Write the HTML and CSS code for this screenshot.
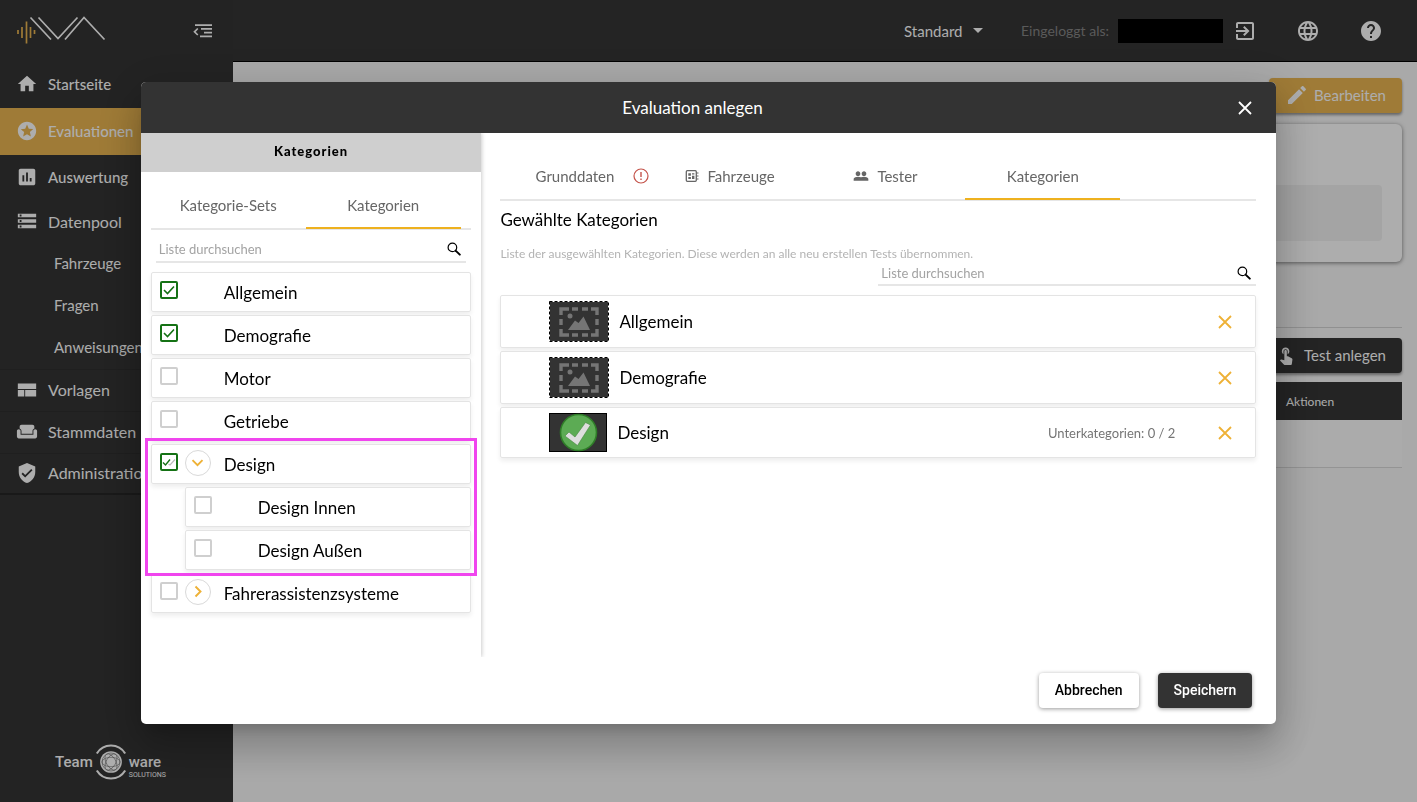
FILE: index.html
```html
<!DOCTYPE html>
<html lang="de">
<head>
<meta charset="utf-8">
<title>Evaluation anlegen</title>
<meta name="viewport" content="width=device-width, initial-scale=1">
<link rel="stylesheet" href="styles.css">
</head>
<body>
<svg class="sprite" aria-hidden="true">
  <symbol id="i-search" viewBox="0 0 14 14"><circle cx="5.4" cy="5.4" r="4.3" fill="none" stroke="#000" stroke-width="1.2"/><path d="M8.6 8.6l4.200 4" stroke="#000" stroke-width="2" stroke-linecap="round"/></symbol>
  <symbol id="i-x" viewBox="0 0 14 14"><path d="M1 1l12 12M13 1L1 13" fill="none" stroke="currentColor" stroke-width="1.8"/></symbol>
  <symbol id="i-image" viewBox="0 0 60 41">
    <rect width="60" height="41" fill="#333"/>
    <rect x=".5" y=".5" width="59" height="40" fill="none" stroke="#fff" stroke-width="1"/>
    <rect x=".5" y=".5" width="59" height="40" fill="none" stroke="#000" stroke-width="1" stroke-dasharray="3 2"/>
    <path d="M12 14V8h8M23 8h6M33 8h6M42 8h6v6M48 18v6M48 28v6h-6M39 34h-6M29 34h-6M20 34h-8v-6M12 24v-6" fill="none" stroke="#757575" stroke-width="3.400"/>
    <circle cx="21" cy="15" r="2.500" fill="#757575"/>
    <path d="M19 29l7-9.500 3.500 2.500 5-6.500L41 29z" fill="#757575"/>
  </symbol>
</svg>

<div class="app">
  <aside class="sidebar">
    <div class="brand">
      <svg class="brand-logo" viewBox="0 0 90 28" role="img" aria-label="IVA"><path d="M2 14v4M6 11v11M10.500 5.500v22M14.500 11v11M18.500 14v4" stroke="#ebb651" stroke-width="1.700" fill="none"/><path d="M14.500 1.500L35 23.500M22.500 1.500L42 22.500 61.500 1.500M49 23.500L68 1.500 88.500 23.500" fill="none" stroke="#fff" stroke-width="1.700"/></svg>
      <button class="icon-btn" type="button" aria-label="Menü einklappen"><svg width="20" height="14" viewBox="0 0 20 14" fill="none" stroke="currentColor"><path d="M2 1.200h17M8 4.900h11M11 8.600h8M7 12.300h12" stroke-width="1.800"/><path d="M4.800 4.500L1.500 7.800l3.300 3.200" stroke-width="1.700"/></svg></button>
    </div>
    <nav>
      <a class="nav-item tall" href="#"><svg viewBox="0 0 24 24"><path d="M10 20v-6h4v6h5v-8h3L12 3 2 12h3v8z"/></svg>Startseite</a>
      <a class="nav-item tall active" href="#"><svg viewBox="0 0 24 24"><path d="M11.990 2C6.470 2 2 6.480 2 12s4.470 10 9.990 10C17.520 22 22 17.520 22 12S17.520 2 11.990 2zm4.240 16L12 15.450 7.770 18l1.120-4.810-3.730-3.230 4.920-.42L12 5l1.920 4.530 4.920.42-3.730 3.230L16.230 18z"/></svg>Evaluationen</a>
      <a class="nav-item tall" href="#"><svg viewBox="0 0 24 24"><path d="M19 3H5c-1.100 0-2 .9-2 2v14c0 1.100.9 2 2 2h14c1.100 0 2-.9 2-2V5c0-1.100-.9-2-2-2zM9 17H7v-7h2v7zm4 0h-2V7h2v10zm4 0h-2v-4h2v4z"/></svg>Auswertung</a>
      <a class="nav-item" href="#"><svg viewBox="0 0 24 24"><path d="M2 20h20v-4H2v4zm2-3h2v2H4v-2zM2 4v4h20V4H2zm4 3H4V5h2v2zm-4 7h20v-4H2v4zm2-3h2v2H4v-2z"/></svg>Datenpool</a>
      <a class="nav-item sub" href="#">Fahrzeuge</a>
      <a class="nav-item sub" href="#">Fragen</a>
      <a class="nav-item sub" href="#">Anweisungen</a>
      <a class="nav-item line" href="#"><svg viewBox="0 0 24 24"><path d="M2 19h7v-7H2v7zm8 0h12v-7H10v7zM2 5v6h20V5H2z"/></svg>Vorlagen</a>
      <a class="nav-item line" href="#"><svg viewBox="0 0 24 24"><path d="M21 9c-1.100 0-2 .9-2 2v4H5v-4c0-1.100-.9-2-2-2s-2 .9-2 2v6c0 1.100.9 2 2 2h18c1.100 0 2-.9 2-2v-6c0-1.100-.9-2-2-2zm-3-5H6c-1.100 0-2 .9-2 2v2.150c1.160.41 2 1.510 2 2.820V14h12v-3.030c0-1.300.84-2.400 2-2.820V6c0-1.100-.9-2-2-2z"/></svg>Stammdaten</a>
      <a class="nav-item line last" href="#"><svg viewBox="0 0 24 24"><path d="M12 1L3 5v6c0 5.550 3.840 10.740 9 12 5.160-1.260 9-6.450 9-12V5l-9-4zm-2 16l-4-4 1.410-1.410L10 14.170l6.590-6.590L18 9l-8 8z"/></svg>Administration</a>
    </nav>
    <div class="vendor">
      <span class="vendor-team">Team</span>
      <svg width="34" height="38" viewBox="0 0 36 40" fill="none" stroke="#fff" aria-hidden="true"><path d="M3 11a17.500 17.500 0 0 1 30 0M3 29a17.500 17.500 0 0 0 30 0" stroke-width="2.200"/><circle cx="18" cy="20" r="11.500" fill="#fff" stroke="none"/><g stroke="#777" stroke-width=".7"><ellipse cx="18" cy="20" rx="9.500" ry="5"/><ellipse cx="18" cy="20" rx="9.500" ry="5" transform="rotate(60 18 20)"/><ellipse cx="18" cy="20" rx="9.500" ry="5" transform="rotate(120 18 20)"/><circle cx="18" cy="20" r="9.500"/></g></svg>
      <span class="vendor-ware">ware<small>SOLUTIONS</small></span>
    </div>
  </aside>

  <div class="page">
    <header class="topbar">
      <label class="picker"><select aria-label="Ansicht"><option>Standard</option></select><svg width="10" height="5" viewBox="0 0 10 5"><path d="M0 0h10L5 5z" fill="#fff"/></svg></label>
      <span class="login">Eingeloggt als:</span>
      <span class="redacted"></span>
      <div class="tools">
        <button class="icon-btn" type="button" aria-label="Abmelden"><svg width="24" height="24" viewBox="0 0 24 24" fill="currentColor"><path d="M10.090 15.590L11.500 17l5-5-5-5-1.410 1.410L12.670 11H3v2h9.670l-2.580 2.590zM19 3H5c-1.110 0-2 .9-2 2v4h2V5h14v14H5v-4H3v4c0 1.100.89 2 2 2h14c1.100 0 2-.9 2-2V5c0-1.100-.9-2-2-2z"/></svg></button>
        <button class="icon-btn" type="button" aria-label="Sprache"><svg width="24" height="24" viewBox="0 0 24 24" fill="currentColor"><path d="M11.990 2C6.470 2 2 6.480 2 12s4.470 10 9.990 10C17.520 22 22 17.520 22 12S17.520 2 11.990 2zm6.930 6h-2.950c-.32-1.250-.78-2.450-1.380-3.560 1.840.63 3.370 1.910 4.330 3.560zM12 4.040c.83 1.200 1.480 2.530 1.910 3.960h-3.820c.43-1.430 1.080-2.760 1.910-3.960zM4.260 14C4.100 13.360 4 12.690 4 12s.1-1.360.26-2h3.380c-.08.66-.14 1.320-.14 2s.06 1.340.14 2H4.260zm.82 2h2.950c.32 1.250.78 2.450 1.380 3.560-1.840-.63-3.370-1.900-4.330-3.560zm2.950-8H5.080c.96-1.660 2.490-2.930 4.330-3.560C8.810 5.550 8.350 6.750 8.030 8zM12 19.960c-.83-1.200-1.480-2.530-1.910-3.960h3.820c-.43 1.430-1.080 2.760-1.910 3.960zM14.340 14H9.660c-.09-.66-.16-1.320-.16-2s.07-1.350.16-2h4.680c.09.65.16 1.320.16 2s-.07 1.340-.16 2zm.25 5.560c.6-1.110 1.060-2.310 1.380-3.560h2.950c-.96 1.650-2.490 2.930-4.330 3.560zM16.360 14c.08-.66.14-1.320.14-2s-.06-1.340-.14-2h3.380c.16.64.26 1.310.26 2s-.1 1.360-.26 2h-3.380z"/></svg></button>
        <button class="icon-btn" type="button" aria-label="Hilfe"><svg width="24" height="24" viewBox="0 0 24 24" fill="currentColor"><path d="M12 2C6.480 2 2 6.480 2 12s4.480 10 10 10 10-4.480 10-10S17.520 2 12 2zm1 17h-2v-2h2v2zm2.070-7.750l-.9.920C13.450 12.900 13 13.500 13 15h-2v-.5c0-1.100.45-2.100 1.170-2.830l1.240-1.260c.37-.36.59-.86.59-1.410 0-1.100-.9-2-2-2s-2 .9-2 2H8c0-2.210 1.790-4 4-4s4 1.790 4 4c0 .88-.36 1.680-.93 2.250z"/></svg></button>
      </div>
    </header>
    <main class="content">
      <button class="btn gold" type="button"><svg width="24" height="24" viewBox="0 0 24 24" fill="currentColor"><path d="M3 17.250V21h3.750L17.810 9.940l-3.750-3.750L3 17.250zM20.710 7.040c.39-.39.39-1.020 0-1.410l-2.340-2.340c-.39-.39-1.020-.39-1.410 0l-1.830 1.830 3.750 3.750 1.830-1.830z"/></svg>Bearbeiten</button>
      <section class="card"><div class="card-fill"></div></section>
      <hr class="rule">
      <button class="btn dark" type="button"><svg width="20" height="20" viewBox="0 0 24 24" fill="currentColor"><path d="M9 11.240V7.500C9 6.120 10.120 5 11.500 5S14 6.120 14 7.500v3.740c1.210-.81 2-2.180 2-3.740C16 5.010 13.990 3 11.500 3S7 5.010 7 7.500c0 1.560.79 2.930 2 3.740zm9.840 4.630l-4.540-2.260c-.17-.07-.35-.11-.54-.11H13v-6c0-.83-.67-1.500-1.500-1.500S10 6.670 10 7.500v10.740l-3.430-.72c-.08-.01-.15-.03-.24-.03-.31 0-.59.13-.79.33l-.79.8 4.940 4.940c.27.27.65.44 1.060.44h6.790c.75 0 1.330-.55 1.440-1.280l.75-5.270c.01-.07.02-.14.02-.2 0-.62-.38-1.160-.91-1.380z"/></svg>Test anlegen</button>
      <table class="tests"><thead><tr><th></th><th class="actions">Aktionen</th></tr></thead><tbody><tr><td></td><td></td></tr></tbody></table>
    </main>
  </div>
</div>

<div class="backdrop">
  <div class="dialog" role="dialog" aria-modal="true" aria-labelledby="dlg-title">
    <header class="dialog-head"><h1 id="dlg-title">Evaluation anlegen</h1><button class="close" type="button" aria-label="Schließen"><svg width="14" height="14"><use href="#i-x"/></svg></button></header>
    <div class="dialog-body">
      <section class="source">
        <h2 class="source-title">Kategorien</h2>
        <div class="source-inner">
          <div class="tabs"><button class="tab" type="button">Kategorie-Sets</button><button class="tab current" type="button">Kategorien</button></div>
          <div class="search inset"><input type="text" placeholder="Liste durchsuchen" aria-label="Kategorien durchsuchen"><svg width="14" height="14"><use href="#i-search"/></svg></div>
          <ul class="tree">
            <li class="node"><input id="c1" type="checkbox" checked><span class="toggle-gap"></span><label for="c1">Allgemein</label></li>
            <li class="node"><input id="c2" type="checkbox" checked><span class="toggle-gap"></span><label for="c2">Demografie</label></li>
            <li class="node"><input id="c3" type="checkbox"><span class="toggle-gap"></span><label for="c3">Motor</label></li>
            <li class="node"><input id="c4" type="checkbox"><span class="toggle-gap"></span><label for="c4">Getriebe</label></li>
            <li class="group">
              <div class="node"><input id="c5" class="partial" type="checkbox" checked><button class="toggle" type="button" aria-label="Design zuklappen"><svg width="13" height="8" viewBox="0 0 13 8"><path d="M1.500 1.200l5 5 5-5" fill="none" stroke="#eeb136" stroke-width="1.900"/></svg></button><label for="c5">Design</label></div>
              <ul class="children">
                <li class="node"><input id="c6" type="checkbox"><span class="toggle-gap"></span><label for="c6">Design Innen</label></li>
                <li class="node"><input id="c7" type="checkbox"><span class="toggle-gap"></span><label for="c7">Design Außen</label></li>
              </ul>
            </li>
            <li class="node"><input id="c8" type="checkbox"><button class="toggle" type="button" aria-label="Fahrerassistenzsysteme aufklappen"><svg width="8" height="13" viewBox="0 0 8 13"><path d="M1.500 1.500l5 5-5 5" fill="none" stroke="#eeb136" stroke-width="1.900"/></svg></button><label for="c8">Fahrerassistenzsysteme</label></li>
          </ul>
        </div>
      </section>
      <section class="chosen">
        <div class="tabs">
          <button class="tab trail" type="button"><span>Grunddaten</span><svg width="16" height="16" viewBox="0 0 16 16" fill="none" stroke="#c4534a"><circle cx="8" cy="8" r="7" stroke-width="1.200"/><path d="M8 4v5M8 10.500v1.500" stroke-width="1.400"/></svg></button>
          <button class="tab lead" type="button"><svg width="14" height="14" viewBox="0 0 14 14" fill="none" stroke="#666"><rect x="1.300" y="1.700" width="10" height="10.600" rx="1" stroke-width="1.300"/><path d="M12 4h1.500M12 7h1.500M12 10h1.500" stroke-width="1.200"/><path d="M3.300 4.200h2.600v2.500H3.300zM3.300 8h2.600v2H3.300zM7 4.200h2.400v1.300H7zM7 6.800h2.400V10H7z" fill="#666" stroke="none"/></svg><span>Fahrzeuge</span></button>
          <button class="tab lead" type="button"><svg width="16" height="16" viewBox="0 0 24 24" fill="#666"><path d="M16.500 13c-1.200 0-3.070.34-4.500 1-1.430-.67-3.300-1-4.500-1C5.330 13 1 14.080 1 16.250V19h22v-2.750c0-2.170-4.330-3.250-6.500-3.250zM7.500 12c1.930 0 3.500-1.570 3.500-3.500S9.430 5 7.500 5 4 6.570 4 8.500 5.570 12 7.500 12zm9 0c1.930 0 3.500-1.570 3.500-3.500S18.430 5 16.500 5 13 6.570 13 8.500s1.570 3.500 3.500 3.500z"/></svg><span>Tester</span></button>
          <button class="tab current" type="button">Kategorien</button>
        </div>
        <h2 class="chosen-title">Gewählte Kategorien</h2>
        <p class="hint">Liste der ausgewählten Kategorien. Diese werden an alle neu erstellen Tests übernommen.</p>
        <div class="search half"><input type="text" placeholder="Liste durchsuchen" aria-label="Gewählte Kategorien durchsuchen"><svg width="14" height="14"><use href="#i-search"/></svg></div>
        <ul class="picked">
          <li><svg width="60" height="41"><use href="#i-image"/></svg><span class="name">Allgemein</span><button class="remove" type="button" aria-label="Allgemein entfernen"><svg width="14" height="14"><use href="#i-x"/></svg></button></li>
          <li><svg width="60" height="41"><use href="#i-image"/></svg><span class="name">Demografie</span><button class="remove" type="button" aria-label="Demografie entfernen"><svg width="14" height="14"><use href="#i-x"/></svg></button></li>
          <li><svg width="58" height="39" viewBox="0 0 58 39"><rect x=".5" y=".5" width="57" height="38" fill="#333" stroke="#000"/><circle cx="29.500" cy="19.500" r="18" fill="#5cab54" stroke="#2f7d28" stroke-width="1.600"/><path d="M16 23l4-4 6 5L36.500 9.500l5 2.500L28.500 32.500z" fill="#dedede" stroke="#478740" stroke-width=".6"/></svg><span class="name">Design</span><span class="count">Unterkategorien: 0 / 2</span><button class="remove" type="button" aria-label="Design entfernen"><svg width="14" height="14"><use href="#i-x"/></svg></button></li>
        </ul>
      </section>
    </div>
    <footer class="dialog-foot"><button class="action" type="button">Abbrechen</button><button class="action primary" type="button">Speichern</button></footer>
  </div>
</div>
</body>
</html>
```

FILE: styles.css
```css
* { box-sizing: border-box; }
body { margin: 0; font-family: Lato, "Open Sans", sans-serif; font-size: 16px; color: #000; }
button, input, select { font: inherit; color: inherit; }
button { border: 0; padding: 0; background: none; cursor: pointer; }
ul { list-style: none; margin: 0; padding: 0; }
svg { flex: none; display: block; }
.sprite { position: absolute; width: 0; height: 0; }

/* Application frame */
.app { display: flex; min-height: 100vh; background: #f9f9f9; }
.sidebar { display: flex; flex-direction: column; flex: 0 0 233px; background: #343434; color: #fff; }
.brand { display: flex; align-items: center; justify-content: space-between; height: 62px; padding: 0 20px 0 16px; }
.brand-logo { width: 90px; height: 28px; margin-bottom: 3px; }
.icon-btn { display: flex; color: #fff; }
.nav-item { display: flex; align-items: center; gap: 10px; height: 42px; padding: 0 0 2px 16px; color: #fff; font-size: 16px; text-decoration: none; white-space: nowrap; }
.nav-item svg { width: 22px; height: 22px; fill: #fff; }
.nav-item.tall { height: 46px; font-size: 15px; font-weight: 500; }
.nav-item.active { height: 47px; background: #ebb651; }
.nav-item.sub { padding-left: 54px; font-size: 15px; }
.nav-item.line { border-top: 1px solid #2e2e2e; }
.nav-item.last { border-bottom: 2px solid #262626; }
.vendor { display: flex; align-items: center; justify-content: center; gap: 1px; margin: auto 0 21px; padding-right: 12px; color: #fff; font: 500 15px/18px Roboto, sans-serif; }
.vendor-ware { display: flex; flex-direction: column; padding-top: 8px; }
.vendor small { font-size: 7px; line-height: 8px; font-weight: normal; }

.page { flex: 1; min-width: 0; }
.topbar { display: flex; align-items: center; justify-content: flex-end; height: 62px; padding-right: 34px; background: #353535; border-bottom: 1px solid #000; color: #fff; font-size: 15px; }
.picker { display: flex; align-items: center; gap: 10px; margin-right: 38px; }
.picker select { appearance: none; border: 0; padding: 0; background: none; }
.login { margin-right: 9px; color: #858585; font-size: 14px; }
.redacted { width: 105px; height: 24px; margin-right: 10px; background: #000; }
.tools { display: flex; gap: 39px; }

.content { display: flex; flex-direction: column; padding: 16px 15px; }
.btn { display: flex; align-items: center; align-self: flex-end; gap: 5px; height: 35px; padding: 0 16px 2px; border-radius: 4px; color: #fff; font-size: 15px; box-shadow: 0 2px 3px rgba(0, 0, 0, .4); }
.btn.gold { background: #ebb651; }
.btn.dark { gap: 8px; background: #353535; }
.card { height: 138px; margin-top: 11px; padding: 61px 20px 20px; border-radius: 6px; background: #fff; box-shadow: 0 1px 4px rgba(0, 0, 0, .5); }
.card-fill { height: 56px; border-radius: 4px; background: #f2f2f2; }
.rule { width: 100%; margin: 65px 0 10px; border: 0; border-top: 1px solid #d5d5d5; }
.tests { width: 100%; margin-top: 9px; border-collapse: collapse; background: #fcfcfc; }
.tests th { height: 38px; padding: 0; background: #353535; color: #fff; font-size: 12px; font-weight: normal; text-align: left; }
.tests .actions { width: 116px; }
.tests td { height: 47px; border-bottom: 1px solid #dadada; }

/* Dialog */
.backdrop { position: fixed; inset: 0; display: grid; place-items: center; padding-top: 4px; background: rgba(0, 0, 0, .32); }
.dialog { display: flex; flex-direction: column; width: calc(80% + 2px); height: 80vh; overflow: hidden; border-radius: 5px; background: #fff; box-shadow: 0 10px 15px -7px rgba(0, 0, 0, .2), 0 24px 38px 3px rgba(0, 0, 0, .16), 0 9px 46px 8px rgba(0, 0, 0, .12); }
.dialog-head { display: flex; align-items: center; flex: 0 0 51px; padding: 0 24px; background: #333; color: #fff; }
.dialog-head h1 { flex: 1; margin: 0; padding-right: 18px; font-size: 17px; font-weight: normal; text-align: center; }
.close { color: #fff; }
.dialog-body { display: flex; flex: 1; min-height: 0; overflow: hidden; }
.source { flex: 0 0 30%; box-shadow: 1px 0 4px rgba(0, 0, 0, .2); }
.source-title { height: 39px; margin: 0; background: #cfcfcf; font-size: 13px; line-height: 36px; font-weight: 900; text-align: center; letter-spacing: 1px; }
.source-inner { padding: 0 10px; }
.tabs { display: flex; border-bottom: 2px solid #e6e6e6; }
.tab { display: flex; align-items: center; justify-content: center; flex: 0 1 155px; min-width: 0; height: 57px; padding-top: 11px; border-bottom: 2px solid transparent; margin-bottom: -1px; color: #666; font-size: 15px; }
.tab.current { border-color: #eeb11f; }
.tab.trail { justify-content: flex-end; gap: 19px; padding-right: 6px; }
.tab.lead { justify-content: flex-start; gap: 8px; padding-left: 30px; }
.tab.lead + .tab.lead { padding-left: 43px; }
.search { display: flex; align-items: center; padding: 0 5px 0 3px; border-bottom: 2px solid #e6e6e6; }
.search input { flex: 1; min-width: 0; padding: 0; border: 0; outline: 0; background: none; font-size: 13px; }
.search input::placeholder { color: #a3a3a3; opacity: 1; }
.search.inset { height: 26px; margin: 7px 5px 0; }
.search.half { width: 50%; margin-left: auto; height: 24px; }
.tree { display: flex; flex-direction: column; gap: 3px; margin-top: 9px; }
.group, .children { display: flex; flex-direction: column; gap: 3px; }
.children { padding-left: 34px; }
.node { display: flex; align-items: center; height: 40px; padding-left: 8px; border: 1px solid #e4e4e4; border-radius: 2px; background: #fff; box-shadow: 0 3px 5px rgba(0, 0, 0, .07); font-size: 17px; }
.node input { appearance: none; flex: none; width: 18px; height: 18px; margin: 0 7px 4px 0; border: 2px solid #cfcfcf; border-radius: 2px; }
.node input:checked { border-color: #157215; background: no-repeat center / 14px 14px url("data:image/svg+xml,%3Csvg xmlns='http://www.w3.org/2000/svg' viewBox='0 0 14 14'%3E%3Cpath d='M2 7l3.500 3.500L12 3.500' fill='none' stroke='%23157215' stroke-width='1.600'/%3E%3C/svg%3E"); }
.node input.partial:checked { background-image: url("data:image/svg+xml,%3Csvg xmlns='http://www.w3.org/2000/svg' viewBox='0 0 14 14'%3E%3Cpath d='M6.500 9l1.500 1L13 4.500' fill='none' stroke='%23bbb' stroke-width='1.200'/%3E%3Cpath d='M1 7.500l2.500 2.500L8 4.500' fill='none' stroke='%23157215' stroke-width='1.400'/%3E%3C/svg%3E"); }
.toggle, .toggle-gap { flex: none; width: 26px; height: 26px; margin-right: 13px; }
.toggle { display: flex; align-items: center; justify-content: center; margin-bottom: 3px; border: 1px solid #d9d9d9; border-radius: 50%; }
/* Marked-up group */
.group { position: relative; }
.group::after { content: ""; position: absolute; inset: -6px; border: 3px solid #f045ee; pointer-events: none; }

.chosen { flex: 1; min-width: 0; padding: 10px 20px 0 19px; }
.chosen-title { margin: 7px 0 0; font-size: 17px; line-height: 24px; font-weight: normal; }
.hint { margin: 14px 0 0; color: #b3b3b3; font-size: 12px; line-height: 16px; }
.picked { display: flex; flex-direction: column; gap: 3px; margin-top: 9px; }
.picked li { display: flex; align-items: center; padding: 5px 23px 5px 48px; border: 1px solid #e4e4e4; border-radius: 2px; background: #fff; box-shadow: 0 3px 5px rgba(0, 0, 0, .07); font-size: 17px; }
.name { margin-left: 10px; }
.count { margin-left: auto; color: #757575; font-size: 13px; }
.remove { margin-left: auto; color: #eeb136; }
.count + .remove { margin-left: 43px; }
.dialog-foot { display: flex; justify-content: flex-end; gap: 19px; flex: 0 0 67px; padding: 16px 24px; }
.action { height: 35px; padding: 0 16px; border-radius: 4px; background: #fff; font: 500 14px Roboto, "Liberation Sans", sans-serif; box-shadow: 0 1px 4px rgba(0, 0, 0, .4); }
.action.primary { background: #333; color: #fff; }
```
